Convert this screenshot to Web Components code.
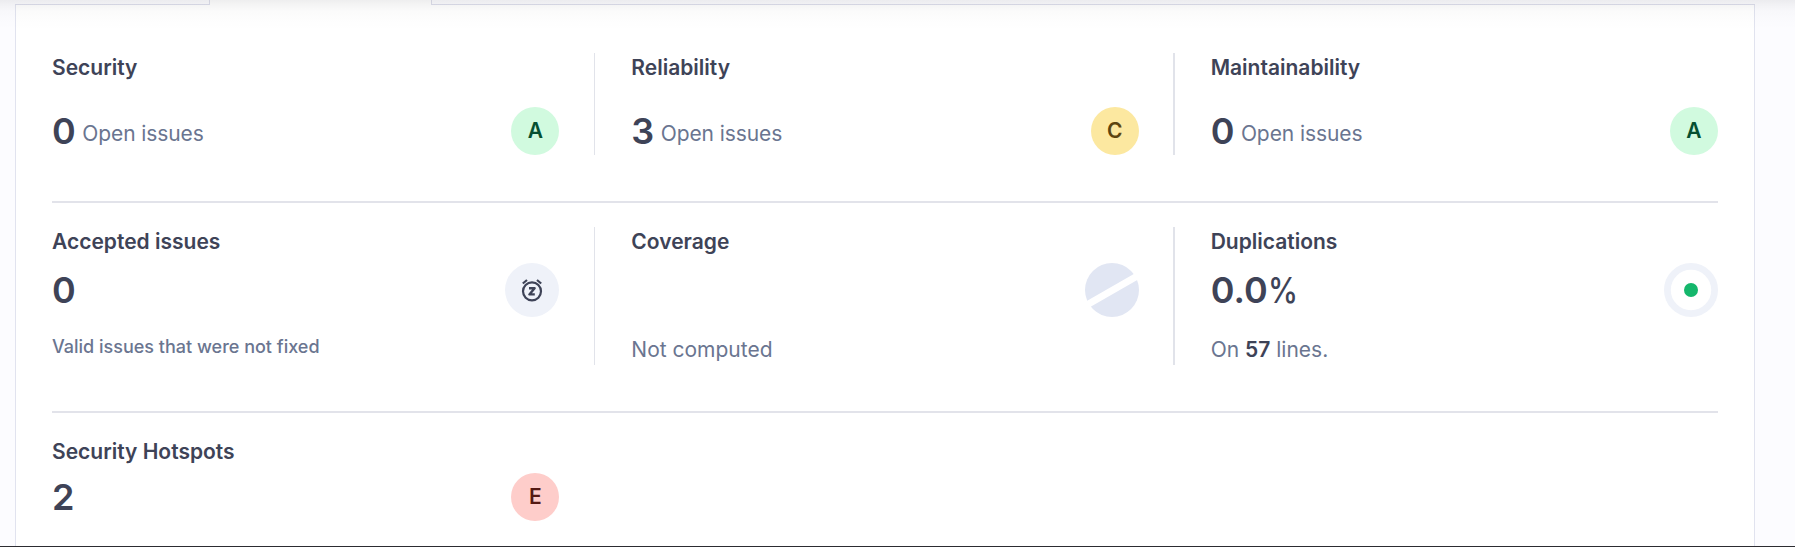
<!DOCTYPE html>
<html lang="en">
<head>
<meta charset="utf-8">
<title>Overall code</title>
<style>
html,body{margin:0;height:100%;overflow:hidden;background:#fcfcff}
body{font-family:Inter,"Liberation Sans",sans-serif;color:#3e4357}
</style>
</head>
<body>
<overview-page>
  <measure-row>
    <measure-card class="roomy" heading="Security" value="0" unit="Open issues"><rating-badge slot="icon" grade="A"></rating-badge></measure-card>
    <measure-card class="roomy" heading="Reliability" value="3" unit="Open issues"><rating-badge slot="icon" grade="C"></rating-badge></measure-card>
    <measure-card class="roomy" heading="Maintainability" value="0" unit="Open issues"><rating-badge slot="icon" grade="A"></rating-badge></measure-card>
  </measure-row>
  <measure-row class="tall">
    <measure-card heading="Accepted issues" value="0"><status-icon slot="icon" kind="snooze"></status-icon><note-text slot="note" small>Valid issues that were not fixed</note-text></measure-card>
    <measure-card heading="Coverage" value=""><status-icon slot="icon" kind="none"></status-icon><note-text slot="note">Not computed</note-text></measure-card>
    <measure-card heading="Duplications" value="0.0%"><status-icon slot="icon" kind="ring"></status-icon><note-text slot="note">On <b style="font-weight:600;color:#3e4357">57</b> lines.</note-text></measure-card>
  </measure-row>
  <measure-row class="last">
    <measure-card heading="Security Hotspots" value="2"><rating-badge slot="icon" grade="E"></rating-badge></measure-card>
  </measure-row>
</overview-page>
<script>
const attach = (el, html) => { el.attachShadow({mode:'open'}).innerHTML = html; };

customElements.define('overview-page', class extends HTMLElement {
  connectedCallback() {
    attach(this, `<style>
      :host{display:flex;flex-direction:column;position:relative;height:547px;box-sizing:border-box;border-bottom:1px solid #2c2c31;padding:0 40px 0 15px}
      .tabs{display:grid;grid-template-columns:195px 221px 1fr;height:5px;flex:none}
      .tabs div{box-sizing:border-box;border-bottom:1px solid #dddeeb;background:#fcfcff}
      .tabs .prev{border-right:1px solid #dddeeb}
      .tabs .active{border-bottom:0;background:#fff}
      .tabs .next{border-left:1px solid #dddeeb}
      main{flex:1;box-sizing:border-box;background:#fff;border:solid #e1e3ef;border-width:0 1px;padding:48px 36px 0}
      .shade{position:absolute;inset:0 0 auto;height:30px;pointer-events:none;background:linear-gradient(rgba(30,30,35,.075),rgba(30,30,35,.05) 4px,rgba(30,30,35,.02) 11px,rgba(30,30,35,.008) 20px,transparent)}
    </style>
    <div class="tabs"><div class="prev"></div><div class="active"></div><div class="next"></div></div>
    <main><slot></slot></main><div class="shade"></div>`);
  }
});

customElements.define('measure-row', class extends HTMLElement {
  connectedCallback() {
    attach(this, `<style>
      :host{display:grid;grid-template:100% / repeat(3,1fr);column-gap:72px;height:102px;padding-bottom:46px;margin-bottom:24px;border-bottom:2px solid #e2e3ea}
      :host(.tall){height:138px}
      :host(.last){border:0;margin:0;padding:0;height:84px}
      ::slotted(:not(:last-child)){border-right:1px solid #e1e3ea;padding-right:35px;margin-right:-36px}
      ::slotted(:nth-child(2)){border-right-width:2px;padding-right:34px}
    </style><slot></slot>`);
  }
});

customElements.define('measure-card', class extends HTMLElement {
  connectedCallback() {
    const unit = this.getAttribute('unit');
    const value = this.getAttribute('value').replace('%', '<span class="percent">%</span>');
    attach(this, `<style>
      :host{display:flex;flex-direction:column;min-width:0}
      .heading{font-size:21px;line-height:30px;font-weight:600}
      .body{display:flex;align-items:center;justify-content:space-between;margin-top:6px}
      :host(.roomy) .body{margin-top:24px}
      .figure{display:flex;align-items:flex-end;gap:6.5px}
      .value{font-size:36px;line-height:48px;font-weight:600}
      .percent{display:inline-block;font-weight:500;transform:scaleX(.84);transform-origin:left}
      .unit{font-size:21px;line-height:30px;letter-spacing:-.09px;color:#6a7590;padding-bottom:6px}
      ::slotted(note-text){margin-top:18px}
    </style>
    <div class="heading">${this.getAttribute('heading')}</div>
    <div class="body"><div class="figure"><span class="value">${value}</span>${unit ? `<span class="unit">${unit}</span>` : ''}</div><slot name="icon"></slot></div>
    <slot name="note"></slot>`);
  }
});

customElements.define('note-text', class extends HTMLElement {
  connectedCallback() {
    attach(this, `<style>
      :host{display:block;font-size:21px;line-height:30px;color:#6a7590}
      :host([small]){font-size:18px;line-height:24px;font-weight:500}
    </style><slot></slot>`);
  }
});

customElements.define('rating-badge', class extends HTMLElement {
  connectedCallback() {
    const grade = this.getAttribute('grade');
    attach(this, `<style>
      :host{display:flex;align-items:center;justify-content:center;width:48px;height:48px;border-radius:50%;font-size:21px;line-height:30px;font-weight:600;background:#d1fadf;color:#054f31}
      :host([grade=C]){background:#fce8a0;color:#5c4510}
      :host([grade=E]){background:#fecdca;color:#551a14}
    </style>${grade}`);
  }
});

const DRAWINGS = {
  snooze: `<circle cx="27" cy="27" r="27" fill="#eff2f9"/>
    <g fill="none" stroke="#3e4357" stroke-width="2.2"><circle cx="27" cy="28.3" r="9"/>
    <path d="M17.8 20.5 22 17M36.2 20.5 32 17"/>
    <path stroke-linejoin="round" stroke-width="2.4" d="M24 25.2h5.6l-5.2 6.2h5.4"/></g>`,
  none: `<circle cx="27" cy="27" r="27" fill="#e1e6f3"/>
    <path d="M-2 44.2 56 10.8" stroke="#fff" stroke-width="7"/>`,
  ring: `<circle cx="27" cy="27" r="23.6" fill="#fff" stroke="#eff2f9" stroke-width="6.8"/>
    <circle cx="27" cy="27" r="7" fill="#15b76c"/>`
};
customElements.define('status-icon', class extends HTMLElement {
  connectedCallback() {
    attach(this, `<style>:host{display:block;width:54px;height:54px}svg{display:block}</style>
    <svg width="54" height="54" viewBox="0 0 54 54">${DRAWINGS[this.getAttribute('kind')]}</svg>`);
  }
});
</script>
</body>
</html>
